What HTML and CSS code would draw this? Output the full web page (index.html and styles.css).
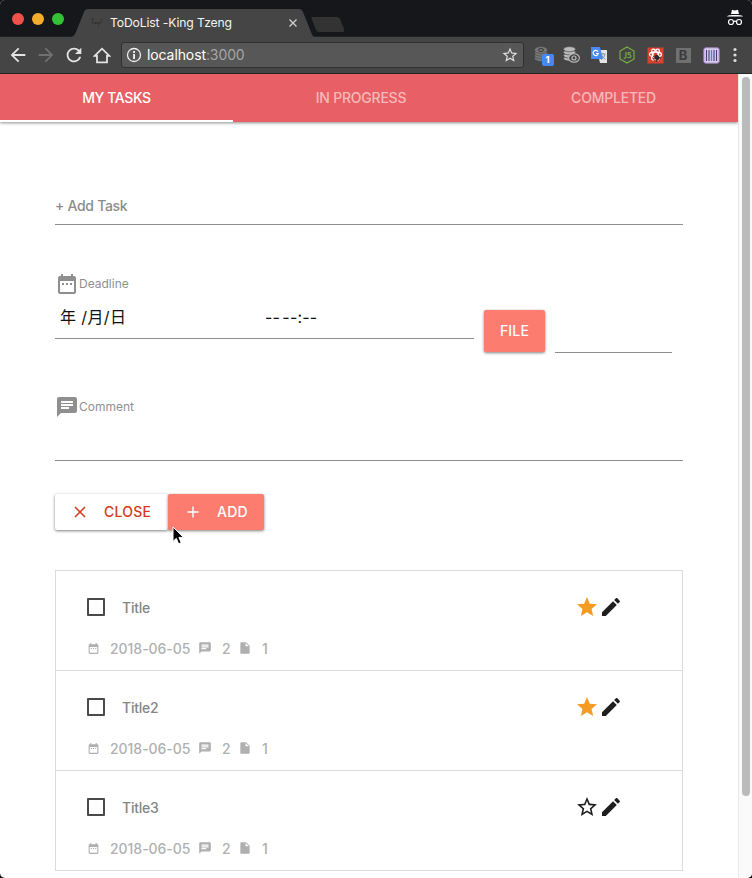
FILE: index.html
```html
<!DOCTYPE html>
<html lang="en">
<head>
<meta charset="utf-8">
<title>ToDoList -King Tzeng</title>
<link rel="stylesheet" href="styles.css">
</head>
<body>
<svg class="defs" aria-hidden="true">
  <symbol id="date" viewBox="0 0 24 24"><path d="M9 11H7v2h2v-2zm4 0h-2v2h2v-2zm4 0h-2v2h2v-2zm2-7h-1V2h-2v2H8V2H6v2H5c-1.110 0-1.990.9-1.990 2L3 20c0 1.100.89 2 2 2h14c1.100 0 2-.9 2-2V6c0-1.100-.9-2-2-2zm0 16H5V9h14v11z"/></symbol>
  <symbol id="chat" viewBox="0 0 24 24"><path d="M20 2H4c-1.100 0-1.990.9-1.990 2L2 22l4-4h14c1.100 0 2-.9 2-2V4c0-1.100-.9-2-2-2zM6 9h12v2H6V9zm8 5H6v-2h8v2zm4-6H6V6h12v2z"/></symbol>
  <symbol id="file" viewBox="0 0 24 24"><path d="M6 2c-1.100 0-1.990.9-1.990 2L4 20c0 1.100.89 2 1.990 2H18c1.100 0 2-.9 2-2V8l-6-6H6zm7 7V3.500L18.500 9H13z"/></symbol>
  <symbol id="pen" viewBox="0 0 24 24"><path d="M3 17.250V21h3.750L17.810 9.940l-3.750-3.750L3 17.250zM20.710 7.040c.39-.39.39-1.020 0-1.410l-2.340-2.340c-.39-.39-1.020-.39-1.410 0l-1.830 1.830 3.750 3.750 1.830-1.830z"/></symbol>
  <symbol id="star" viewBox="0 0 24 24"><path d="M12 17.270 18.180 21l-1.640-7.030L22 9.240l-7.190-.61L12 2 9.190 8.630 2 9.240l5.460 4.730L5.820 21z"/></symbol>
  <symbol id="star-o" viewBox="0 0 24 24"><path d="M22 9.240l-7.190-.62L12 2 9.190 8.630 2 9.240l5.460 4.730L5.820 21 12 17.270 18.180 21l-1.630-7.030L22 9.240zM12 15.400l-3.760 2.270 1-4.280-3.320-2.880 4.380-.38L12 6.100l1.710 4.040 4.380.38-3.320 2.880 1 4.280L12 15.400z"/></symbol>
  <symbol id="arrow" viewBox="0 0 24 24"><path d="M20 11H7.830l5.590-5.590L12 4l-8 8 8 8 1.410-1.410L7.830 13H20v-2z"/></symbol>
</svg>
<div class="window">
  <header class="strip">
    <div class="lights"><i class="red"></i><i class="amber"></i><i class="green"></i></div>
    <div class="browser-tab">
      <svg class="tab-shape" width="243" height="28" viewBox="0 0 243 28"><path d="M0 28C2 27 3 25 4 23L12 3C13 1 14 0 16 0H227C229 0 230 1 231 3L239 23C240 26 241 28 243 28Z" fill="#454545"/></svg>
      <svg class="favicon" width="16" height="14" viewBox="0 0 16 14" fill="none" stroke="#303030" stroke-width=".8"><path d="M1.500 3.500l3-1-1.500 6M5 8l1.500-2v2l1.500-2 .5 2 1.500-2 .5 2 3-5.500M10 8l-1 3"/></svg>
      <span class="tab-title">ToDoList -King Tzeng</span>
      <svg class="tab-close" width="8" height="8" viewBox="0 0 8 8" stroke="#d0d0d0" stroke-width="1.300"><path d="M.5.5l7 7M7.500.5l-7 7"/></svg>
    </div>
    <svg class="new-tab" width="33" height="15" viewBox="0 0 33 15"><path d="M2 0h23c2 0 3 .5 4 2l4 10c.5 2 0 3-2 3H9c-2 0-3-.5-4-2L1 3C0 1 0 0 2 0z" fill="#333"/></svg>
    <svg class="incognito" width="16" height="17" viewBox="0 0 16 17"><path d="M5 .8l3 .7 3-.7L12 5H4zM0 7.500c1-1.200 3-1.500 8-1.500s7 .3 8 1.500z" fill="#fff"/><g fill="none" stroke="#fff" stroke-width="1.200"><circle cx="4" cy="13" r="2.500"/><circle cx="12" cy="13" r="2.500"/><path d="M6.500 12.700q1.500-1 3 0"/></g></svg>
  </header>
  <div class="toolbar">
    <svg class="nav" width="22" height="22" fill="#e3e3e3"><use href="#arrow"/></svg>
    <svg class="nav flip" width="22" height="22" fill="#707070"><use href="#arrow"/></svg>
    <svg class="nav" width="22" height="22" viewBox="0 0 24 24" fill="#e3e3e3"><path d="M17.650 6.350C16.200 4.900 14.210 4 12 4c-4.420 0-7.990 3.580-7.990 8s3.570 8 7.990 8c3.730 0 6.840-2.550 7.730-6h-2.080c-.82 2.330-3.040 4-5.650 4-3.310 0-6-2.690-6-6s2.690-6 6-6c1.660 0 3.140.69 4.220 1.780L13 11h7V4l-2.350 2.350z"/></svg>
    <svg class="nav home" width="18" height="17" viewBox="0 0 18 17" fill="none" stroke="#e3e3e3" stroke-width="1.800"><path d="M1.700 8.800L9 1.700l7.300 7.100H14v6.500H4V8.800z"/></svg>
    <div class="address">
      <svg width="16" height="16" viewBox="0 0 16 16"><circle cx="8" cy="8" r="6.500" fill="none" stroke="#eee" stroke-width="1.300"/><path d="M7.100 7h1.900v5H7.100zM7.100 4h1.900v1.900H7.100z" fill="#eee"/></svg>
      <span class="url">localhost<span class="port">:3000</span></span>
      <svg class="bookmark" width="18" height="18" fill="#e0e0e0"><use href="#star-o"/></svg>
    </div>
    <div class="extensions">
      <div class="stack-one">
        <svg width="16" height="18" viewBox="0 0 16 18"><g fill="#777" stroke="#454545" stroke-width=".5"><ellipse cx="7" cy="12.500" rx="6.500" ry="3"/><ellipse cx="7" cy="9.800" rx="6.500" ry="3"/><ellipse cx="7" cy="7.100" rx="6.500" ry="3"/><ellipse cx="7" cy="4" rx="6.500" ry="3.500"/></g><ellipse cx="7" cy="4" rx="2.600" ry="1.500" fill="none" stroke="#3a3a3a"/></svg>
        <span class="count">1</span>
      </div>
      <svg width="17" height="18" viewBox="0 0 17 18"><g fill="#bbb" stroke="#454545" stroke-width=".7"><ellipse cx="6.500" cy="12.500" rx="6" ry="2.600"/><ellipse cx="6.500" cy="9.500" rx="6" ry="2.600"/><ellipse cx="6.500" cy="6.300" rx="6" ry="2.600"/><ellipse cx="6.500" cy="3.200" rx="6" ry="2.600"/></g><ellipse cx="11" cy="12" rx="5.400" ry="4.200" fill="#454545" stroke="#bbb" stroke-width="1.100"/><circle cx="11" cy="12" r="2" fill="none" stroke="#bbb" stroke-width="1.200"/></svg>
      <svg width="18" height="18" viewBox="0 0 18 18"><path d="M7 4h10v13H10z" fill="#e4e4e4"/><path d="M10.500 8h5M13 7v1m2 0c-.5 3-2 4.500-4 5.500m.5-5c.5 2 2 3.500 4 5" stroke="#8b9299" fill="none"/><path d="M1 1h9l3 12H1z" fill="#4a8af4"/><path d="M8 5.700A2.600 2.600 0 1 0 8.300 7.500H6" stroke="#fff" stroke-width="1.200" fill="none"/></svg>
      <svg width="18" height="18" viewBox="0 0 18 18" fill="none" stroke="#7bb342" stroke-width="1.100"><path d="M9 1l7 4v8l-7 4-7-4V5z"/><path d="M8 6v5q0 1.500-2.500 1M13 7q-3-1-3 .6 0 1 1.500 1.200T13 10.200Q13 12 9.700 11.200"/></svg>
      <svg width="17" height="17" viewBox="0 0 17 17"><path d="M.5.5h16v16H.5z" fill="#d9412e"/><g fill="none" stroke="#fff" stroke-width="1.300"><ellipse cx="8.500" cy="7.500" rx="6" ry="2.500"/><ellipse cx="8.500" cy="7.500" rx="6" ry="2.500" transform="rotate(60 8.500 7.500)"/><ellipse cx="8.500" cy="7.500" rx="6" ry="2.500" transform="rotate(-60 8.500 7.500)"/></g><ellipse cx="10" cy="10.500" rx="2.800" ry="2.400" fill="#302724" transform="rotate(40 10 10.500)"/><path d="M6 9l2 1m-2 2h2m4-1h2m-5 4l1-2" stroke="#302724"/></svg>
      <div class="b-icon">B</div>
      <svg width="17" height="17" viewBox="0 0 17 17"><rect x=".8" y=".8" width="15.400" height="15.400" rx="2" fill="#d9cdeb" stroke="#9e80bd"/><path d="M3.500 3v11M6 3v11M11 3v11M13.500 3v11" stroke="#493b7d" stroke-width="1.100"/><path d="M8.500 3v11" stroke="#4d84d6" stroke-width="1.300"/></svg>
    </div>
    <svg class="more" width="4" height="16" viewBox="0 0 4 16" fill="#ddd"><circle cx="2" cy="2.500" r="1.600"/><circle cx="2" cy="8" r="1.600"/><circle cx="2" cy="13.500" r="1.600"/></svg>
  </div>
  <div class="viewport">
    <div class="page">
      <nav class="tabs">
        <a class="tab active"><span>MY TASKS</span></a>
        <a class="tab"><span>IN PROGRESS</span></a>
        <a class="tab"><span>COMPLETED</span></a>
      </nav>
      <main class="content">
        <div class="field add-task"><span>+ Add Task</span></div>
        <div class="label deadline"><svg width="24" height="24"><use href="#date"/></svg><span>Deadline</span></div>
        <div class="row">
          <div class="field when"><span class="day">年 /月/日</span><span class="time">-- --:--</span></div>
          <button class="btn file-btn"><span>FILE</span></button>
          <div class="field file-path"></div>
        </div>
        <div class="label comment"><svg width="24" height="24"><use href="#chat"/></svg><span>Comment</span></div>
        <div class="field comment-field"></div>
        <div class="actions">
          <button class="btn close-btn"><svg width="12" height="12" viewBox="0 0 12 12" stroke="currentColor" stroke-width="1.500"><path d="M1 1l10 10M11 1L1 11"/></svg><span>CLOSE</span></button>
          <button class="btn add-btn"><svg width="12" height="12" viewBox="0 0 12 12" stroke="currentColor" stroke-width="1.400"><path d="M6 .5v11M.5 6h11"/></svg><span>ADD</span></button>
          <svg class="cursor" width="13" height="19" viewBox="0 0 13 19"><path d="M1 1v14.500l3.300-3.200 2.300 5.500 2.600-1.100-2.300-5.300h4.600z" fill="#000" stroke="#fff"/></svg>
        </div>
        <ul class="list">
          <li class="item">
            <div class="head"><i class="box"></i><span class="name">Title</span><svg class="star gold" width="24" height="24"><use href="#star"/></svg><svg width="24" height="24"><use href="#pen"/></svg></div>
            <div class="meta"><svg width="13" height="13"><use href="#date"/></svg><span class="date">2018-06-05</span><svg class="m-chat" width="14" height="14"><use href="#chat"/></svg><span class="num">2</span><svg class="m-file" width="14" height="14"><use href="#file"/></svg><span>1</span></div>
          </li>
          <li class="item">
            <div class="head"><i class="box"></i><span class="name">Title2</span><svg class="star gold" width="24" height="24"><use href="#star"/></svg><svg width="24" height="24"><use href="#pen"/></svg></div>
            <div class="meta"><svg width="13" height="13"><use href="#date"/></svg><span class="date">2018-06-05</span><svg class="m-chat" width="14" height="14"><use href="#chat"/></svg><span class="num">2</span><svg class="m-file" width="14" height="14"><use href="#file"/></svg><span>1</span></div>
          </li>
          <li class="item">
            <div class="head"><i class="box"></i><span class="name">Title3</span><svg class="star" width="24" height="24"><use href="#star-o"/></svg><svg width="24" height="24"><use href="#pen"/></svg></div>
            <div class="meta"><svg width="13" height="13"><use href="#date"/></svg><span class="date">2018-06-05</span><svg class="m-chat" width="14" height="14"><use href="#chat"/></svg><span class="num">2</span><svg class="m-file" width="14" height="14"><use href="#file"/></svg><span>1</span></div>
          </li>
        </ul>
      </main>
    </div>
    <div class="scrollbar"><div class="thumb"></div></div>
  </div>
</div>
</body>
</html>
```
FILE: styles.css
```css
* { box-sizing: border-box; }
body { margin: 0; background: #111; font-family: Inter, "Noto Sans CJK TC", sans-serif; }
.defs { position: absolute; width: 0; height: 0; }
svg { display: block; flex: none; }
span { white-space: nowrap; }
.window { width: 752px; height: 878px; display: flex; flex-direction: column; overflow: hidden; border-radius: 5px; background: #fff; }

.strip { height: 37px; flex: none; background: #16171b; display: flex; align-items: flex-start; border-bottom: 1px solid #222; }
.lights { display: flex; gap: 8px; padding: 13px 0 0 12px; width: 72px; }
.lights i { width: 12px; height: 12px; border-radius: 50%; }
.red { background: #f0524b; }
.amber { background: #f5ad2e; }
.green { background: #35c136; }
.browser-tab { position: relative; width: 243px; height: 28px; margin-top: 9px; display: flex; align-items: center; }
.tab-shape { position: absolute; left: 0; top: 0; }
.favicon { position: relative; margin-left: 17px; }
.tab-title { position: relative; margin-left: 5px; width: 178px; padding-bottom: 1px; color: #f4f4f4; font-size: 12.200px; letter-spacing: -.14px; }
.tab-close { position: relative; margin-left: 1px; }
.new-tab { margin: 17px 0 0 -4px; }
.incognito { margin: 9px 9px 0 auto; }

.toolbar { height: 37px; flex: none; background: #454545; border-bottom: 1px solid #262626; display: flex; align-items: center; padding-left: 7px; }
.nav { margin-right: 6px; }
.flip { transform: scaleX(-1); }
.home { margin: 0 10px 0 2px; }
.address { width: 403px; height: 26px; background: #575757; border: 1px solid #303030; border-radius: 3px; display: flex; align-items: center; padding: 0 4px; }
.url { margin-left: 5px; padding-bottom: 1px; font-size: 14px; letter-spacing: -.1px; color: #fff; }
.port { color: #a5a5a5; }
.bookmark { margin-left: auto; }
.extensions { display: grid; grid-template-columns: repeat(7, 28px); align-items: center; justify-items: center; margin-left: 5px; width: 196px; }
.stack-one { position: relative; width: 19px; height: 18px; }
.count { position: absolute; left: 8px; top: 8px; width: 12px; height: 12px; border-radius: 2px; background: #4688f1; color: #fff; font: bold 9.500px/12px Inter, sans-serif; text-align: center; }
.b-icon { width: 15px; height: 15px; background: #707070; color: #3b3b3b; font: bold 13px/15px Inter, sans-serif; text-align: center; }
.more { margin-left: 8px; }

.viewport { flex: 1; min-height: 0; display: flex; }
.page { width: 738px; }
.scrollbar { width: 14px; background: #fafafa; border-left: 1px solid #e7e7e7; padding: 3px 0 0 3px; }
.thumb { width: 8px; height: 719px; border-radius: 4px; background: #bbb; }
.tabs { height: 48px; display: grid; grid-template-columns: 233px 256px 249px; background: #e86065; box-shadow: 0 1px 3px rgba(0,0,0,.45); }
.tab { display: flex; align-items: center; justify-content: center; border-bottom: 2px solid transparent; padding-top: 1px; font-size: 14px; font-weight: 500; letter-spacing: -.22px; color: #f6b9bb; }
.active { color: #fff; border-color: #fff; letter-spacing: -.38px; }
.content { width: 628px; margin-left: 55px; }
.field { border-bottom: 1px solid #8e8e8e; }
.add-task { height: 103px; padding-top: 74px; color: #8c8c8c; font-size: 14px; line-height: 20px; font-weight: 500; letter-spacing: -.3px; }
.label { display: flex; align-items: center; height: 24px; color: #8f8f8f; fill: #8f8f8f; font-size: 12px; }
.label span { padding-bottom: 2px; }
.deadline { margin-top: 47px; }
.row { display: flex; height: 57px; }
.when { width: 419px; height: 43px; display: flex; font-size: 16px; line-height: 43px; padding-left: 5px; color: #111; }
.day { width: 205px; letter-spacing: .4px; }
.time { letter-spacing: .2px; word-spacing: -2.500px; }
.btn { font-family: inherit; border: 0; border-radius: 2px; padding: 0; display: flex; align-items: center; background: #fd7c70; color: #fff; font-size: 14px; font-weight: 500; box-shadow: 0 1px 3px rgba(0,0,0,.5); }
.btn span { padding-bottom: 1px; }
.file-btn { width: 61px; height: 42px; margin: 14px 10px 0; justify-content: center; letter-spacing: .2px; }
.file-path { width: 117px; }
.comment { margin-top: 42px; }
.comment-field { height: 42px; }
.actions { position: relative; display: flex; margin-top: 33px; height: 36px; }
.close-btn { width: 113px; background: #fff; color: #d13a1c; padding-left: 19px; gap: 18px; letter-spacing: .25px; }
.add-btn { width: 96px; padding-left: 19px; gap: 18px; letter-spacing: .2px; }
.cursor { position: absolute; left: 117px; top: 32px; }
.list { list-style: none; margin: 40px 0 0; padding: 0; border: 1px solid #dcdcdc; }
.item { height: 100px; border-bottom: 1px solid #dcdcdc; padding: 24px 59.500px 0 31px; }
.item:last-child { border-bottom: 0; height: 99px; }
.head { height: 24px; display: flex; align-items: center; fill: #1f1f1f; }
.box { width: 18px; height: 18px; border: 2px solid #4a4a4a; border-radius: 1px; }
.name { margin-left: 17px; color: #858585; font-size: 14px; font-weight: 500; line-height: 22px; padding-top: 2px; letter-spacing: -.25px; }
.star { margin-left: auto; }
.gold { fill: #f59a23; }
.meta { display: flex; align-items: center; margin-top: 19px; height: 20px; color: #b0b0b0; fill: #b0b0b0; font-size: 14px; font-weight: 500; }
.date { margin-left: 10px; width: 82px; letter-spacing: -.04px; }
.m-chat { margin-left: 6px; }
.num { margin: 0 8px 0 10px; width: 8px; }
.m-file { margin-right: 10px; }
```
